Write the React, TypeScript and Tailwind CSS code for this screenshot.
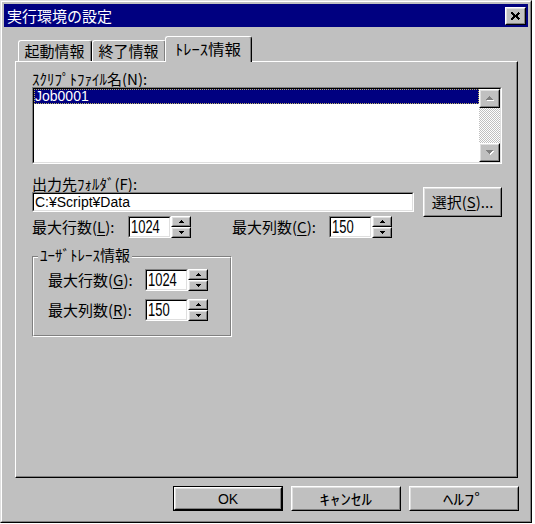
import React from "react";

const RAISED_OUT = "border border-t-white border-l-white border-r-black border-b-black";
const RAISED_IN = "border border-t-[#dfdfdf] border-l-[#dfdfdf] border-r-[#808080] border-b-[#808080]";
const SUNK_OUT = "border border-t-[#808080] border-l-[#808080] border-r-white border-b-white";
const SUNK_IN = "border border-t-black border-l-black border-r-[#dfdfdf] border-b-[#dfdfdf]";

function Raised({ className = "", children }: { className?: string; children?: React.ReactNode }) {
  return (
    <div className={`${RAISED_OUT} bg-[#c0c0c0] ${className}`}>
      <div className={`${RAISED_IN} w-full h-full flex items-center justify-center`}>{children}</div>
    </div>
  );
}

function TinyTri({ up }: { up?: boolean }) {
  return (
    <svg width="5" height="3" viewBox="0 0 5 3" shapeRendering="crispEdges">
      {up ? <polygon points="2.5,0 5,3 0,3" fill="black" /> : <polygon points="0,0 5,0 2.5,3" fill="black" />}
    </svg>
  );
}

function GrayTri({ up }: { up?: boolean }) {
  return (
    <svg width="9" height="6" viewBox="0 0 9 6" shapeRendering="crispEdges">
      {up ? (
        <>
          <polygon points="5,1 9,5 1,5" fill="white" />
          <polygon points="4,0 8,4 0,4" fill="#808080" />
        </>
      ) : (
        <>
          <polygon points="1,1 9,1 5,5" fill="white" />
          <polygon points="0,0 8,0 4,4" fill="#808080" />
        </>
      )}
    </svg>
  );
}

function Num({ value }: { value: string }) {
  return (
    <span className="inline-block origin-left scale-x-[0.72] font-['Liberation_Sans',sans-serif] text-[18px] leading-[18px]">
      {value}
    </span>
  );
}

function Spin({ value }: { value: string }) {
  return (
    <div className="flex h-[22px]">
      <div className={`w-[43px] h-full ${SUNK_OUT}`}>
        <div className={`w-full h-full ${SUNK_IN} bg-white pl-[1px] flex items-center`}>
          <Num value={value} />
        </div>
      </div>
      <div className="w-[20px] h-full flex flex-col">
        <Raised className="h-[11px]">
          <TinyTri up />
        </Raised>
        <Raised className="h-[11px]">
          <TinyTri />
        </Raised>
      </div>
    </div>
  );
}

function Label({ children, className = "" }: { children: React.ReactNode; className?: string }) {
  return <div className={`text-[15px] leading-[16px] whitespace-nowrap ${className}`}>{children}</div>;
}

function U({ children }: { children: React.ReactNode }) {
  return <span className="underline underline-offset-2">{children}</span>;
}

function Tab({ label, active, className = "" }: { label: React.ReactNode; active?: boolean; className?: string }) {
  return (
    <div
      className={`border-t border-l border-r border-t-white border-l-white border-r-black rounded-tl-[3px] rounded-tr-[3px] bg-[#c0c0c0] ${
        active ? "h-[26px] -mb-[1px] relative z-10" : "h-[21px]"
      } ${className}`}
    >
      <div className="w-full h-full border-r border-r-[#808080] rounded-tr-[2px] flex items-center justify-center text-[15px] leading-[16px] whitespace-nowrap">
        <span className={active ? "-mt-[2px]" : ""}>{label}</span>
      </div>
    </div>
  );
}

function Btn({ children, def, className = "" }: { children: React.ReactNode; def?: boolean; className?: string }) {
  const inner = (
    <Raised className="w-full h-full">
      <span className="text-[15px] leading-[16px] whitespace-nowrap">{children}</span>
    </Raised>
  );
  return def ? <div className={`border border-black ${className}`}>{inner}</div> : <div className={className}>{inner}</div>;
}

export default function App() {
  return (
    <div className="w-[535px] h-[524px] bg-white font-['Noto_Sans_CJK_JP',sans-serif] text-black">
      <div className="w-[532px] h-[523px] bg-[#c0c0c0] border border-t-[#dfdfdf] border-l-[#dfdfdf] border-r-black border-b-black">
        <div className="w-full h-full border border-t-white border-l-white border-r-[#808080] border-b-[#808080] p-[2px] flex flex-col">
          {/* Title bar */}
          <div className="h-[23px] bg-[#000080] flex items-center justify-between pl-[3px] pr-[2px]">
            <span className="text-white text-[15px] leading-[18px]">実行環境の設定</span>
            <Raised className="w-[21px] h-[18px]">
              <svg width="9" height="8" viewBox="0 0 9 8" shapeRendering="crispEdges">
                <path d="M0.5 0.5 L8.5 7.5 M8.5 0.5 L0.5 7.5" stroke="black" strokeWidth="2.2" fill="none" />
              </svg>
            </Raised>
          </div>

          {/* Body */}
          <div className="pl-[11px] pt-[9px] flex flex-col">
            {/* Tabs */}
            <div className="h-[25px] flex items-end pl-[3px] relative z-10">
              <Tab label="起動情報" className="w-[74px]" />
              <Tab label="終了情報" className="w-[74px]" />
              <Tab
                label={
                  <span className="inline-block scale-x-[1.1]">ﾄﾚｰｽ情報</span>
                }
                active
                className="w-[87px] -ml-[1px]"
              />
            </div>

            {/* Panel */}
            <div className="w-[503px] h-[417px] border border-t-white border-l-white border-r-black border-b-black">
              <div className="w-full h-full border-r border-b border-r-[#808080] border-b-[#808080] pl-[16px] pt-[9px] flex flex-col items-start">
                <Label>
                  ｽｸﾘﾌﾟﾄﾌｧｲﾙ名(<U>N</U>):
                </Label>
                {/* Listbox */}
                <div className={`w-[470px] h-[77px] ${SUNK_OUT}`}>
                  <div className={`w-full h-full ${SUNK_IN} bg-white flex`}>
                    <div className="flex-1">
                      <div className="h-[15px] bg-[#000080] text-white font-['Liberation_Sans',sans-serif] text-[14px] leading-[15px] pl-[1px] outline-1 outline-dotted outline-[#b8b060] -outline-offset-1">
                        Job0001
                      </div>
                    </div>
                    <div className="w-[21px] flex flex-col">
                      <Raised className="h-[19px]">
                        <GrayTri up />
                      </Raised>
                      <div className="flex-1 bg-[repeating-conic-gradient(#c0c0c0_0_25%,#ffffff_0_50%)] bg-[length:2px_2px]" />
                      <Raised className="h-[19px]">
                        <GrayTri />
                      </Raised>
                    </div>
                  </div>
                </div>

                <Label className="mt-[12px]">
                  出力先ﾌｫﾙﾀﾞ(<U>F</U>):
                </Label>
                <div className="flex items-center h-[20px]">
                  <div className={`w-[382px] h-[20px] ${SUNK_OUT}`}>
                    <div className={`w-full h-full ${SUNK_IN} bg-white pl-[1px] flex items-center font-['Liberation_Sans',sans-serif] text-[14px] leading-[16px]`}>
                      C:¥Script¥Data
                    </div>
                  </div>
                  <Btn className="ml-[9px] w-[79px] h-[30px] shrink-0">
                    選択(<U>S</U>)...
                  </Btn>
                </div>

                <div className="flex items-center h-[22px] mt-[4px]">
                  <Label className="w-[96px]">
                    最大行数(<U>L</U>):
                  </Label>
                  <Spin value="1024" />
                  <Label className="ml-[41px] w-[97px]">
                    最大列数(<U>C</U>):
                  </Label>
                  <Spin value="150" />
                </div>

                {/* Group box */}
                <div className={`relative mt-[18px] w-[200px] h-[81px] ${SUNK_OUT}`}>
                  <div className="w-full h-full border border-t-white border-l-white border-r-[#808080] border-b-[#808080] pl-[14px] pt-[11px] flex flex-col">
                    <div className="flex items-center h-[22px]">
                      <Label className="w-[97px]">
                        最大行数(<U>G</U>):
                      </Label>
                      <Spin value="1024" />
                    </div>
                    <div className="flex items-center h-[22px] mt-[8px]">
                      <Label className="w-[97px]">
                        最大列数(<U>R</U>):
                      </Label>
                      <Spin value="150" />
                    </div>
                  </div>
                  <span className="absolute -top-[10px] left-[5px] px-[2px] bg-[#c0c0c0] text-[15px] leading-[16px] whitespace-nowrap">
                    ﾕｰｻﾞﾄﾚｰｽ情報
                  </span>
                </div>
              </div>
            </div>

            {/* Bottom buttons */}
            <div className="mt-[8px] flex justify-end gap-[8px] pr-[9px]">
              <Btn def className="w-[110px] h-[25px]">
                <span className="font-['Liberation_Sans',sans-serif] text-[14px]">OK</span>
              </Btn>
              <Btn className="w-[110px] h-[25px]">
                <span className="inline-block scale-x-[1.4]">ｷｬﾝｾﾙ</span>
              </Btn>
              <Btn className="w-[110px] h-[25px]">
                <span className="inline-block scale-x-[1.4]">ﾍﾙﾌﾟ</span>
              </Btn>
            </div>
          </div>
        </div>
      </div>
    </div>
  );
}
